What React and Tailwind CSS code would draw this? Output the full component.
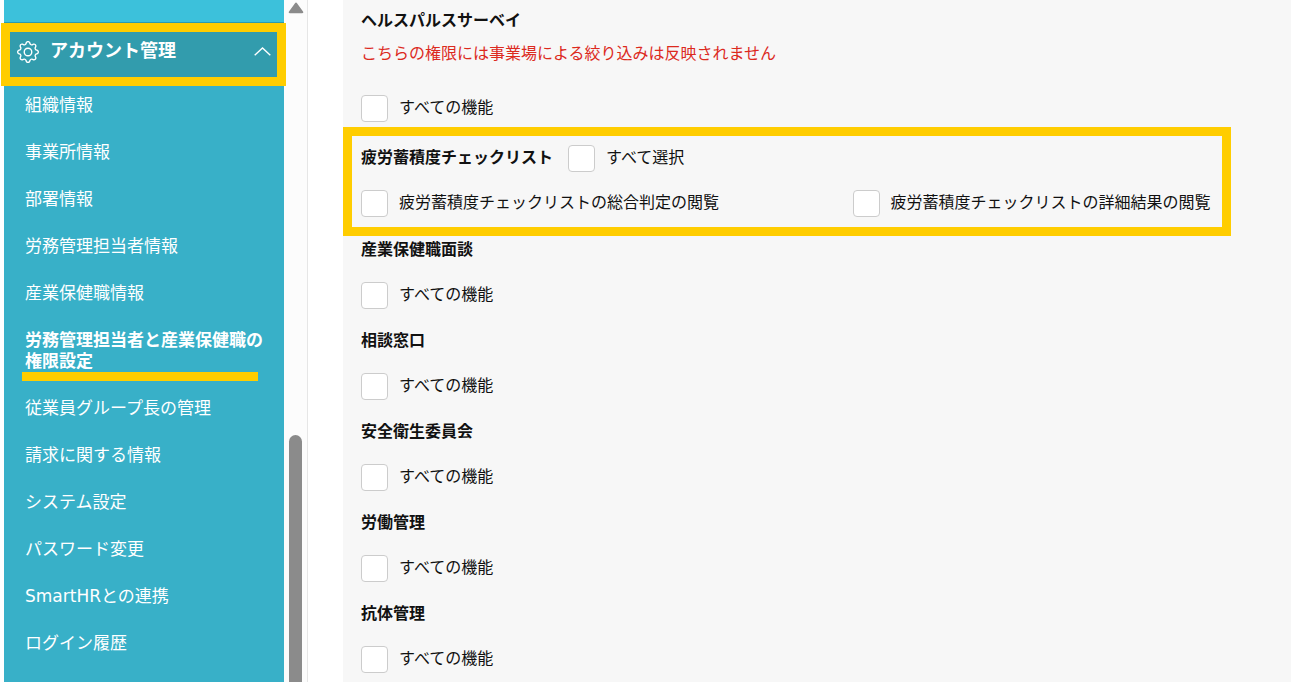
import { BsGear } from 'react-icons/bs';

const menuItems = [
  { label: '組織情報' },
  { label: '事業所情報' },
  { label: '部署情報' },
  { label: '労務管理担当者情報' },
  { label: '産業保健職情報' },
  { label: '労務管理担当者と産業保健職の権限設定', current: true },
  { label: '従業員グループ長の管理' },
  { label: '請求に関する情報' },
  { label: 'システム設定' },
  { label: 'パスワード変更' },
  { label: 'SmartHRとの連携' },
  { label: 'ログイン履歴' },
];

const sections = ['産業保健職面談', '相談窓口', '安全衛生委員会', '労働管理', '抗体管理'];

function Check({ label }) {
  return (
    <label className="flex items-center gap-[11px] whitespace-nowrap">
      <input
        type="checkbox"
        className="size-[27px] shrink-0 appearance-none rounded-[4px] border border-[#cccccc] bg-white checked:bg-[#38b0c8]"
      />
      <span className="pb-px leading-6">{label}</span>
    </label>
  );
}

function Sidebar() {
  return (
    <nav className="ml-1 w-[280px] shrink-0 bg-[#38b0c8] text-white">
      <div className="h-[23px] border-b border-[#2b9bb0] bg-[#3cc1db]" />
      <div className="relative">
        <button
          type="button"
          aria-expanded="true"
          className="flex h-[63px] w-full items-center gap-[11px] bg-[#329cad] pr-[13px] pb-[6px] pl-[13px] text-lg font-bold"
        >
          <BsGear className="size-[22px] shrink-0" aria-hidden="true" />
          <span className="pb-[2px]">アカウント管理</span>
          <svg
            className="ml-auto h-[9px] w-[17px]"
            viewBox="0 0 17 9"
            fill="none"
            stroke="currentColor"
            strokeWidth="1.4"
            aria-hidden="true"
          >
            <path d="M.7 8.2 8.5 1l7.8 7.2" />
          </svg>
        </button>
        <div className="pointer-events-none absolute inset-y-0 -right-[2px] -left-[3px] border-[9px] border-[#ffcd00]" />
      </div>
      <ul className="flex flex-col gap-[26px] pt-[9px] pr-5 pb-6 pl-[21px] text-[17px] leading-[21px]">
        {menuItems.map((item) => (
          <li key={item.label} className="relative">
            <a
              href="#"
              aria-current={item.current ? 'page' : undefined}
              className={item.current ? 'block font-bold' : 'block'}
            >
              {item.label}
            </a>
            {item.current && (
              <span className="absolute top-full right-[6px] -left-[3px] h-[9px] bg-[#ffcd00]" />
            )}
          </li>
        ))}
      </ul>
    </nav>
  );
}

function ScrollTrack() {
  return (
    <div
      className="flex w-6 shrink-0 flex-col items-center justify-between border-r border-[#e6e6e6] bg-[#fcfcfc] pt-[2px]"
      aria-hidden="true"
    >
      <svg className="h-3 w-4" viewBox="0 0 16 12" fill="#8b8b8b">
        <path d="M7 1.2q1-1.400 2 0l6 8.300q.9 1.700-1 1.700H2q-1.900 0-1-1.700z" />
      </svg>
      <div className="h-[36.3%] w-[13px] rounded-t-full bg-[#8b8b8b]" />
    </div>
  );
}

export default function App() {
  return (
    <div className="flex h-screen overflow-hidden bg-white font-['DejaVu_Sans','Noto_Sans_CJK_JP',sans-serif] text-base text-[#111111]">
      <Sidebar />
      <ScrollTrack />
      <main className="ml-[35px] min-w-0 grow bg-[#f7f7f7] pt-[9px]">
        <section className="pb-[5px] pl-[18px]">
          <h2 className="font-bold">ヘルスパルスサーベイ</h2>
          <p className="mt-[9px] mb-[29px] text-[#dc2a1e]">
            こちらの権限には事業場による絞り込みは反映されません
          </p>
          <Check label="すべての機能" />
        </section>
        <section className="mr-[60px] flex flex-col gap-[18px] border-[9px] border-[#ffcd00] px-[9px] pt-[9px] pb-[10px]">
          <div className="flex items-center gap-[15px]">
            <h2 className="pb-px font-bold">疲労蓄積度チェックリスト</h2>
            <Check label="すべて選択" />
          </div>
          <div className="grid grid-cols-[15fr_11fr]">
            <Check label="疲労蓄積度チェックリストの総合判定の閲覧" />
            <Check label="疲労蓄積度チェックリストの詳細結果の閲覧" />
          </div>
        </section>
        <div className="flex flex-col gap-5 pt-[2px] pl-[18px]">
          {sections.map((title) => (
            <section key={title} className="flex flex-col gap-5">
              <h2 className="font-bold">{title}</h2>
              <Check label="すべての機能" />
            </section>
          ))}
        </div>
      </main>
    </div>
  );
}
